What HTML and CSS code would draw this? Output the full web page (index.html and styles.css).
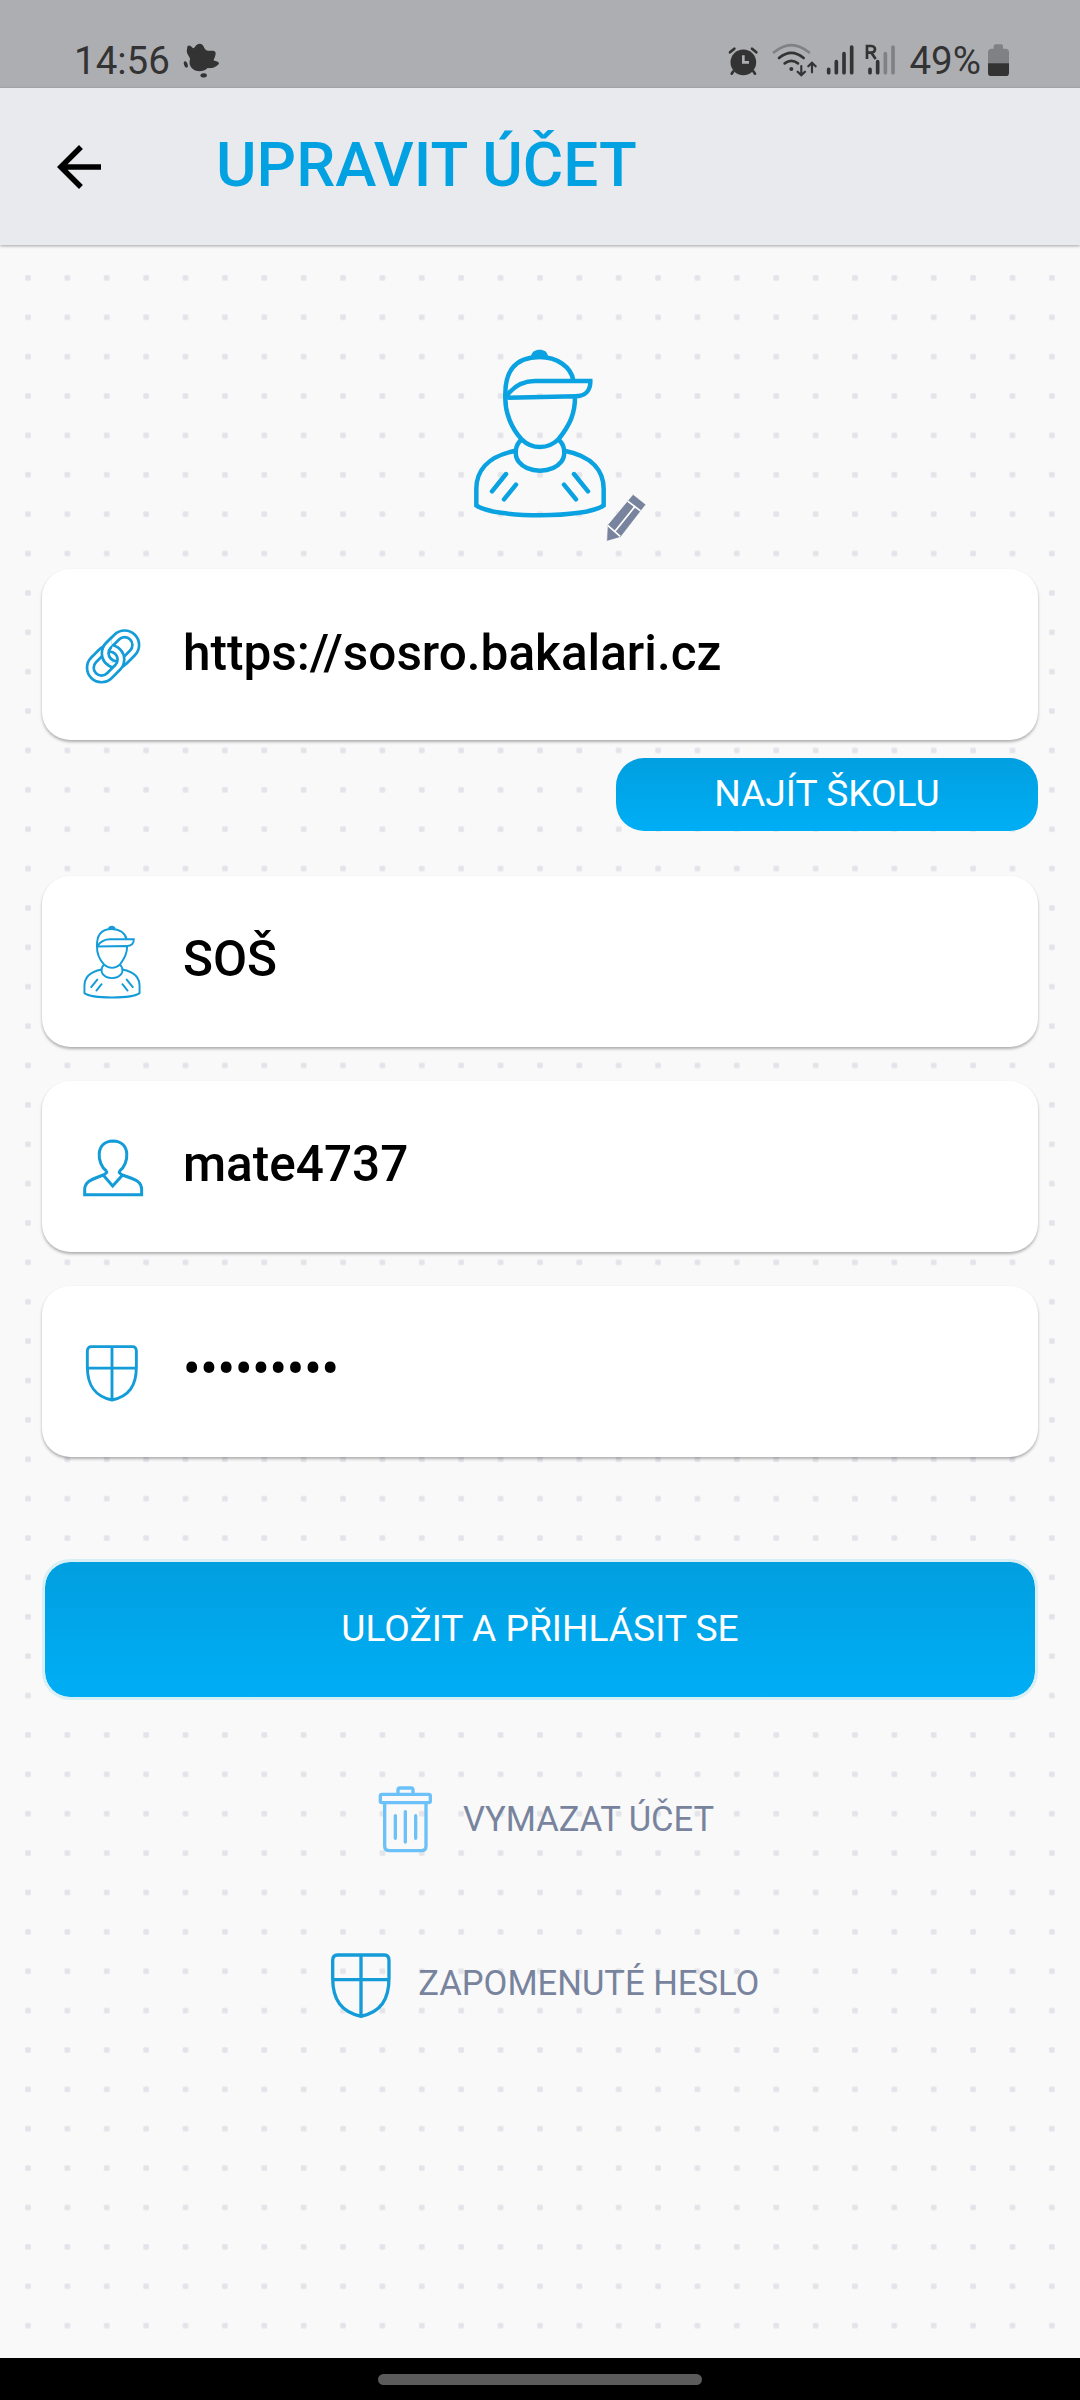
FILE: index.html
```html
<!DOCTYPE html>
<html lang="cs">
<head>
<meta charset="utf-8">
<title>Upravit účet</title>
<link rel="stylesheet" href="styles.css">
</head>
<body>
<svg class="defs" aria-hidden="true">
  <defs>
    <pattern id="dots" width="39.38" height="39.38" patternUnits="userSpaceOnUse" x="8.3" y="13.2">
      <rect x="16.9" y="16.9" width="5.6" height="5.6" rx="1" fill="#e3e4e9"/>
    </pattern>
    <symbol id="student" viewBox="98 55 402 512">
      <g fill="none" stroke="currentColor" stroke-width="13.5" stroke-linecap="round">
        <path d="M195 200C193 130 220 82 298 82C350 82 392 112 399 152"/>
        <path d="M200 197C222 168 252 154 285 154H450C451 182 435 199 407 200L195 204C194 250 214 296 243 328C276 360 323 360 355 328C390 284 404 250 404 203" stroke-linejoin="miter"/>
        <path d="M243 330C225 345 220 375 235 396C263 432 335 432 363 396C378 375 373 345 355 330"/>
        <path d="M226 363C140 380 107 425 108 480V527C160 567 438 567 490 527V480C491 425 458 380 372 363"/>
        <path d="M197 433L155 485M227 465L191 509M401 433L443 485M371 465L407 509"/>
      </g>
      <path fill="currentColor" d="M272 80C274 66 284 60 298 60S321 66 323 80Q298 92 272 80Z"/>
    </symbol>
    <symbol id="shield" viewBox="90 606 186 202">
      <path d="M112 615H254Q266 615 267 630V684C267 750 242 786 183 799C124 786 98 750 98 684V630Q99 615 112 615ZM183 615V799M98 689H267" fill="none" stroke="currentColor" stroke-width="10"/>
    </symbol>
  </defs>
</svg>

<div class="statusbar">
  <span class="clock">14:56</span>
  <svg class="splat" viewBox="550 130 111 106" fill="#333"><path d="M563 140C568 134 574 140 580 146C588 144 588 132 600 132C612 132 612 146 620 152C630 156 644 150 648 158C650 166 644 176 642 182C650 186 660 186 658 193C650 205 635 207 624 206C612 218 592 219 579 209C568 200 568 188 571 178C568 168 560 164 561 152Z"/><ellipse cx="558" cy="195" rx="5.500" ry="10" transform="rotate(-18 558 195)"/><ellipse cx="612" cy="228" rx="10" ry="6.500" transform="rotate(-8 612 228)"/></svg>
  <div class="indicators">
    <svg class="alarm" viewBox="82 138 92 90"><circle cx="128" cy="187" r="38.500" fill="#333"/><path d="M88 157L101 146M167 157L154 146M98 214L93 221M158 214L163 221" stroke="#333" stroke-width="8" stroke-linecap="round"/><path d="M128 166V187H145" fill="none" stroke="#adaeb2" stroke-width="8"/></svg>
    <svg class="wifi" viewBox="214 130 136 102" fill="none" stroke="#333" stroke-width="8" stroke-linecap="round"><path d="M220 158Q272 114 325 158" stroke="#808184"/><path d="M235 175Q272 144 309 175M252 191Q272 176 292 191"/><circle cx="272" cy="208" r="6" fill="#333" stroke="none"/><path d="M302 199V226M291 216L302 227L313 216M334 218V190M323 200L334 189L345 200" stroke-width="6.500"/></svg>
    <svg class="signal" viewBox="376 130 86 98" stroke="#333" stroke-width="11" stroke-linecap="round"><path d="M384 209V219M407 186V219M430 162V219M453 142V219"/></svg>
    <svg class="signal-r" viewBox="492 130 92 98" fill="none" stroke="#333" stroke-width="11" stroke-linecap="round"><path d="M553 162V219M576 142V219" stroke="#808184"/><path d="M507 209V219M530 186V219"/><path d="M498 178V139H511Q522 140 522 149T511 159H498M511 159L524 178" stroke-width="8" stroke-linecap="butt"/></svg>
    <span class="percent">49%</span>
    <svg class="battery" viewBox="864 131 63 98"><path d="M864 190V156Q864 145 875 145H881V138Q881 132 887 132H903Q909 132 909 138V145H916Q927 145 927 156V190Z" fill="#808184"/><path d="M864 189H927V218Q927 228 916 228H875Q864 228 864 218Z" fill="#333"/></svg>
  </div>
</div>

<header class="appbar">
  <svg class="back" viewBox="0 0 24 24"><path d="M20 11H7.830l5.590-5.590L12 4l-8 8 8 8 1.410-1.410L7.830 13H20v-2z"/></svg>
  <h1>UPRAVIT ÚČET</h1>
</header>

<main>
  <svg class="backdrop" aria-hidden="true"><rect width="100%" height="100%" fill="url(#dots)"/></svg>
  <div class="avatar">
    <svg class="portrait"><use href="#student"/></svg>
    <svg class="pencil" viewBox="495 492 126 146"><path d="M578 496L616 526L541 623L500 635L502 587Z" fill="#78849e" stroke="#fff" stroke-width="2"/><path d="M562 516L600 545M585 530L524 606M503 588L540 620" stroke="#fff" stroke-width="5"/></svg>
  </div>

  <div class="field">
    <svg class="ic-link" viewBox="196 233 169 169" fill="none">
      <defs><clipPath id="over"><path d="M196 233H270L284 335L246 345Z"/></clipPath></defs>
      <g id="upper"><rect x="264" y="263" width="102" height="67" rx="33.500" transform="rotate(-45 302.500 296.500) translate(-12.500 0)" stroke="#139cd8" stroke-width="28"/><rect x="264" y="263" width="102" height="67" rx="33.500" transform="rotate(-45 302.500 296.500) translate(-12.500 0)" stroke="#fff" stroke-width="12"/></g>
      <rect x="207" y="306.500" width="102" height="67" rx="33.500" transform="rotate(-45 258 340)" stroke="#139cd8" stroke-width="28"/>
      <rect x="207" y="306.500" width="102" height="67" rx="33.500" transform="rotate(-45 258 340)" stroke="#fff" stroke-width="12"/>
      <g clip-path="url(#over)"><use href="#upper"/></g>
    </svg>
    <span>https://sosro.bakalari.cz</span>
  </div>
  <button class="find">NAJÍT ŠKOLU</button>
  <div class="field">
    <svg class="ic-student"><use href="#student"/></svg>
    <span>SOŠ</span>
  </div>
  <div class="field">
    <svg class="ic-user" viewBox="186 206 186 178" fill="none" stroke="#139cd8" stroke-width="9"><path d="M250 317C213 331 193 337 194 362V376H365V362C366 337 344 329 307 317M260 306C230 285 224 216 279 215C334 216 328 285 298 306M260 304V310L250 318L278 350L307 318L298 310V304"/></svg>
    <span>mate4737</span>
  </div>
  <div class="field">
    <svg class="ic-shield"><use href="#shield"/></svg>
    <span class="bullets">•••••••••</span>
  </div>

  <button class="save">ULOŽIT A PŘIHLÁSIT SE</button>

  <div class="action delete">
    <svg class="ic-trash" viewBox="235 107 165 204" fill="none" stroke="#6bc1f8" stroke-width="10" stroke-linecap="round" stroke-linejoin="round"><path d="M295 133V122Q295 116 301 116H334Q340 116 340 122V133"/><rect x="242" y="135" width="150" height="25" rx="5"/><path d="M255 162V290Q255 304 269 304H365Q379 304 379 290V162M287 199V267M317 187V278M348 199V267"/></svg>
    <span>VYMAZAT ÚČET</span>
  </div>
  <div class="action forgot">
    <svg class="ic-shield-lg"><use href="#shield"/></svg>
    <span>ZAPOMENUTÉ HESLO</span>
  </div>
</main>

<footer class="navbar"><div class="handle"></div></footer>
</body>
</html>
```
FILE: styles.css
```css
* { box-sizing: border-box; }

body {
  margin: 0;
  width: 1080px;
  height: 2400px;
  overflow: hidden;
  display: flex;
  flex-direction: column;
  background: #f9f9f9;
  font-family: Roboto, "Liberation Sans", sans-serif;
}

svg { display: block; flex: none; }
.defs { position: absolute; width: 0; height: 0; }

.statusbar {
  flex: none;
  height: 88px;
  padding: 32px 71px 0 74px;
  display: flex;
  align-items: flex-start;
  background: #adaeb2;
  color: #333;
  font-size: 38.5px;
  line-height: 58px;
}
.clock { width: 109px; }
.splat { width: 37px; height: 35px; margin-top: 11px; }
.clock, .percent { height: 56px; }
.indicators { margin-left: auto; display: flex; align-items: flex-start; }
.alarm { width: 30.7px; height: 30px; margin-top: 14px; }
.wifi { width: 45.3px; height: 34px; margin: 11.3px 0 0 13.3px; }
.signal { width: 28.7px; height: 32.7px; margin: 11.3px 0 0 8.7px; }
.signal-r { width: 30.7px; height: 32.7px; margin: 11.3px 0 0 10px; }
.percent { width: 78.6px; margin-left: 14px; white-space: nowrap; }
.battery { width: 21px; height: 32.7px; margin-top: 11.7px; }

.appbar {
  flex: none;
  height: 157px;
  padding: 0 46px;
  display: flex;
  align-items: center;
  background: #e8eaee;
  box-shadow: 0 1px 3px rgba(0, 0, 0, .35);
  z-index: 1;
}
.back { width: 66px; height: 66px; }
h1 {
  margin: 0 0 4px 104px;
  color: #02a1e2;
  font-size: 62px;
  font-weight: 500;
  line-height: 72px;
}

main {
  flex: 1;
  position: relative;
  isolation: isolate;
  padding: 103px 42px 0;
  display: flex;
  flex-direction: column;
}
.backdrop { position: absolute; inset: 0; width: 100%; height: 100%; z-index: -1; }

.avatar {
  position: relative;
  width: 134px;
  height: 171px;
  margin: 0 0 50px 430.7px;
  color: #0aa2e0;
}
.portrait { width: 134px; height: 170.7px; }
.pencil { position: absolute; left: 132px; top: 145px; width: 42.6px; height: 49.4px; }

.field {
  flex: none;
  height: 171.3px;
  margin-bottom: 33.9px;
  border-radius: 28px;
  background: #fff;
  box-shadow: 0 2px 3px rgba(0, 0, 0, .3);
  display: grid;
  grid-template-columns: 99px 1fr;
  column-gap: 42px;
  align-items: center;
  justify-items: start;
  color: #000;
  font-size: 49.5px;
  font-weight: 500;
}
.field svg { justify-self: end; color: #139cd8; margin-top: 2px; }
.field span { position: relative; top: -2px; white-space: nowrap; }
.field .bullets { top: -3px; }
.ic-link { width: 56.3px; height: 56.3px; }
.ic-student { width: 58px; height: 73.9px; }
.field .ic-user { width: 62px; height: 59.3px; margin-right: -3px; }
.field .ic-shield { width: 54px; height: 58.6px; margin: 4px 2px 0 0; }

button {
  flex: none;
  border: 0;
  color: #fff;
  background: linear-gradient(#019fe0, #00aef5);
  font: 400 37.2px/43px Roboto, "Liberation Sans", sans-serif;
}
.find {
  align-self: flex-end;
  width: 422px;
  height: 73px;
  margin: -16.2px 0 44.5px;
  padding: 0 0 2px;
  border-radius: 28px;
}
.save {
  height: 141px;
  margin-top: 67.5px;
  padding: 0 0 2px;
  border: 3px solid #d9eff6;
  border-radius: 28px;
  background-clip: padding-box;
}

.action {
  flex: none;
  display: flex;
  align-items: center;
  color: #78849e;
  font-size: 34.6px;
}
.delete { height: 68px; margin: 85.7px 0 0 336px; gap: 30px; }
.forgot { height: 68px; margin: 96px 0 0 288px; gap: 26.3px; }
.ic-trash { width: 55px; height: 68px; }
.forgot .ic-shield-lg { width: 62px; height: 67.3px; margin-top: 4px; color: #139cd8; }

.navbar {
  flex: none;
  height: 42px;
  background: #000;
  display: flex;
  justify-content: center;
  padding-top: 16px;
}
.handle { width: 324px; height: 11px; border-radius: 6px; background: #5b5b5b; }
```
